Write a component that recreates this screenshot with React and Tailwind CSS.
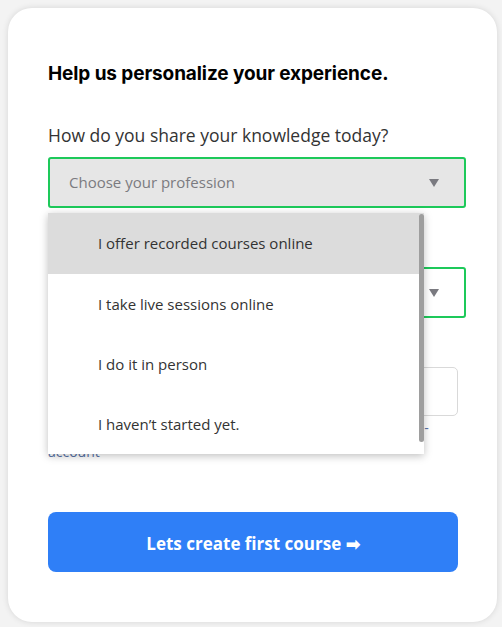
import React from "react";

const options = [
  "I offer recorded courses online",
  "I take live sessions online",
  "I do it in person",
  "I haven\u2019t started yet.",
];

function Caret() {
  return (
    <svg width="10" height="8" viewBox="0 0 10 8" className="shrink-0">
      <path d="M0 0 L10 0 L5 8 Z" fill="#7a7a80" />
    </svg>
  );
}

export default function App() {
  return (
    <div className="min-h-[627px] w-[502px] bg-[#f3f3f3] p-2 [font-family:'Open_Sans',sans-serif]">
      <div className="relative flex h-[614px] w-[489px] flex-col rounded-[24px] bg-white pl-10 pr-[31px] pt-[54px] shadow-[0_0_6px_rgba(0,0,0,0.12)]">
        <h1 className="text-[19px] font-bold leading-6 tracking-[-0.1px] text-black [font-family:Inter,sans-serif]">
          Help us personalize your experience.
        </h1>
        <p className="mt-[37px] text-[17.5px] leading-6 text-[#333]">
          How do you share your knowledge today?
        </p>

        <div className="relative mt-[10px]">
          <div className="flex h-[51px] w-[418px] items-center justify-between rounded-[3px] border-2 border-[#1dc95a] bg-[#e6e6e6] pl-[19px] pr-[25px]">
            <span className="text-[15px] text-[#7b7b80]">Choose your profession</span>
            <Caret />
          </div>

          <div className="absolute left-0 top-[56px] z-10 h-[241px] w-[376px] bg-white shadow-[0_2px_8px_rgba(0,0,0,0.25)]">
            {options.map((o, i) => (
              <div
                key={o}
                className={
                  i === 0
                    ? "flex h-[61px] items-center bg-[#dcdcdc] pl-[50px] text-[15px] text-[#333]"
                    : "flex h-[60px] items-center bg-white pl-[50px] text-[15px] text-[#333]"
                }
              >
                {o}
              </div>
            ))}
            <div className="absolute bottom-[12px] right-0 top-[1px] w-[5px] rounded-full bg-[#9e9e9e]" />
          </div>
        </div>

        <div className="mt-[59px] flex h-[51px] w-[418px] items-center justify-end rounded-[3px] border-2 border-[#1dc95a] bg-white pr-[25px]">
          <Caret />
        </div>

        <div className="mt-[49px] h-[49px] w-[410px] rounded-[5px] border border-[#d9d9d9] bg-white" />

        <p className="whitespace-nowrap text-[14px] leading-6 text-[#5873a8]">
          By signing up I agree to the terms and policies to create a -
          <br />
          account
        </p>

        <button className="mt-[48px] flex h-[60px] w-[410px] items-center justify-center rounded-[8px] bg-[#2f7ff7] pt-[3px] text-[17px] font-bold text-white">
          Lets create first course &#10145;
        </button>
      </div>
    </div>
  );
}
